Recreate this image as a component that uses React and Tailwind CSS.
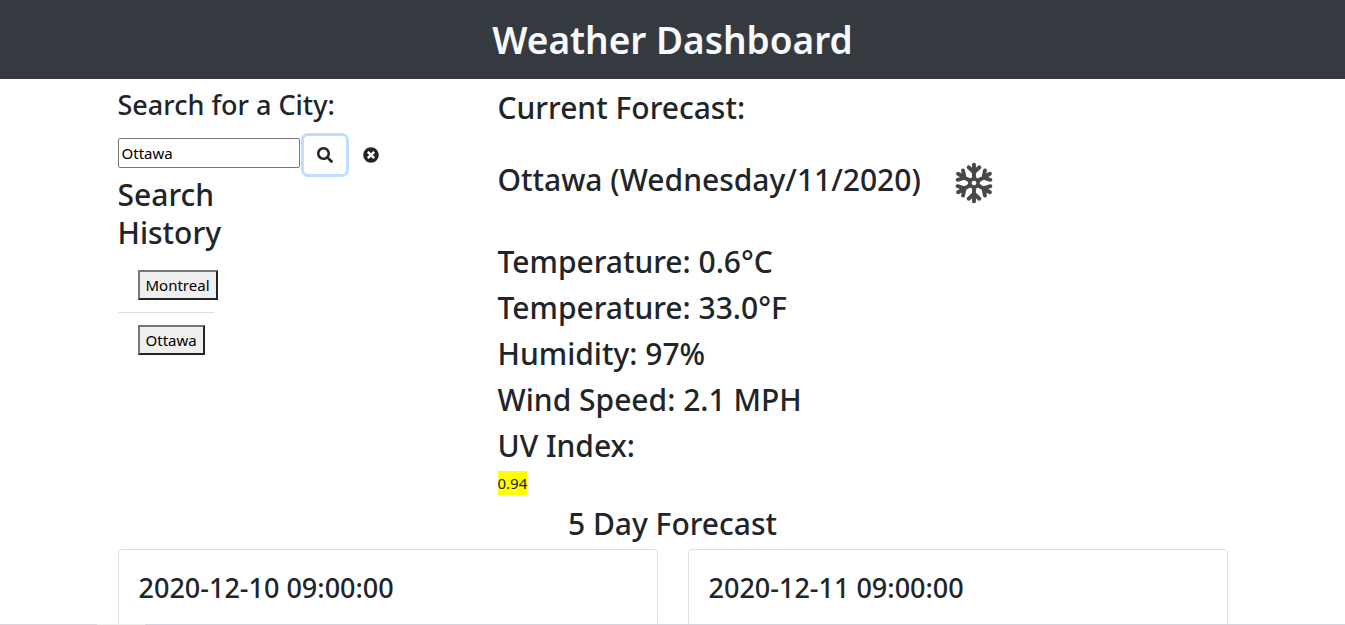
import { FaSearch, FaTimesCircle } from "react-icons/fa";

const history = ["Montreal", "Ottawa"];
const readings = [
  "Temperature: 0.6°C",
  "Temperature: 33.0°F",
  "Humidity: 97%",
  "Wind Speed: 2.1 MPH",
  "UV Index:",
];
const days = ["2020-12-10 09:00:00", "2020-12-11 09:00:00"];

function Snowflake() {
  return (
    <svg viewBox="0 0 42 42" className="mt-1.5 size-[42px]" role="img" aria-label="Snow">
      <g stroke="#48484a" strokeWidth="3.9" strokeLinecap="round" fill="none">
        {[0, 60, 120, 180, 240, 300].map((angle) => (
          <path
            key={angle}
            transform={`rotate(${angle} 21 21)`}
            d="M21 17V2.6M21 10.2L15.6 5.2M21 10.2L26.4 5.2"
          />
        ))}
        <circle cx="21" cy="21" r="4.4" strokeWidth="3.2" />
      </g>
    </svg>
  );
}

export default function App() {
  return (
    <div className="flex h-screen flex-col overflow-hidden bg-white font-['Noto_Sans',sans-serif] text-[15px] leading-6 text-[#212529]">
      <header className="shrink-0 bg-[#343a40] pt-4 pb-[15px] text-center">
        <h1 className="text-[37px] leading-[48px] font-semibold text-[#f8f9fa]">Weather Dashboard</h1>
      </header>

      <main className="mx-auto min-h-0 w-full max-w-[1140px] flex-1 overflow-hidden px-[15px] pt-2">
        <div className="grid grid-cols-3">
          <section className="pr-8">
            <h3 className="mb-[13px] text-[27px] leading-[36px] font-medium">
              <label htmlFor="city">Search for a City:</label>
            </h3>
            <form className="mb-0.5 flex h-[38px] items-start" onSubmit={(e) => e.preventDefault()}>
              <input
                id="city"
                type="text"
                defaultValue="Ottawa"
                className="mt-0.5 h-[30px] w-[182px] rounded-xs border border-[#767676] px-[3px] text-black outline-none"
              />
              <button
                type="submit"
                aria-label="Search"
                className="ml-1 flex h-[38px] w-[42px] items-center justify-center rounded ring-3 ring-[#bfdeff]"
              >
                <FaSearch className="size-4" />
              </button>
              <button
                type="button"
                aria-label="Clear history"
                className="ml-1 flex h-[38px] w-[42px] items-center justify-center rounded"
              >
                <FaTimesCircle className="size-4" />
              </button>
            </form>
            <div className="w-24">
              <h2 className="mb-2 text-[30px] leading-[38px] font-medium">Search History</h2>
              <ul className="divide-y divide-[#dfdfdf]">
                {history.map((city) => (
                  <li key={city} className="flex pt-3 pb-3 pl-5 first:pt-2.5">
                    <button
                      type="button"
                      className="h-[30px] border-2 border-t-[#767676] border-r-[#212529] border-b-[#212529] border-l-[#767676] bg-[#efefef] px-1.5 text-black"
                    >
                      {city}
                    </button>
                  </li>
                ))}
              </ul>
            </div>
          </section>

          <section className="col-span-2 pl-2.5 text-[30px] leading-[38px] font-medium">
            <h2 className="mt-0.5">Current Forecast:</h2>
            <div className="mt-[23px] mb-6 flex h-[60px] items-center gap-8">
              <h2>Ottawa (Wednesday/11/2020)</h2>
              <Snowflake />
            </div>
            <div className="flex flex-col gap-2 pt-[9px]">
              {readings.map((reading) => (
                <h2 key={reading}>{reading}</h2>
              ))}
            </div>
            <p className="mt-1.5 text-[15px] leading-6 font-normal">
              <span className="inline-block bg-[#ffff00]">0.94</span>
            </p>
          </section>
        </div>

        <h2 className="mt-2.5 mb-1.5 text-center text-[30px] leading-[38px] font-medium">5 Day Forecast</h2>
        <div className="grid grid-cols-2 gap-[30px]">
          {days.map((day) => (
            <article key={day} className="h-52 rounded border border-[#dfdfdf] p-5">
              <h3 className="text-[27px] leading-[36px] font-medium">{day}</h3>
            </article>
          ))}
        </div>
      </main>

      <footer className="flex h-px shrink-0">
        <div className="w-[97px] bg-[#dcd3dc]" />
        <div className="w-12 bg-[#ececec]" />
        <div className="flex-1 bg-[#d6d3e2]" />
      </footer>
    </div>
  );
}
